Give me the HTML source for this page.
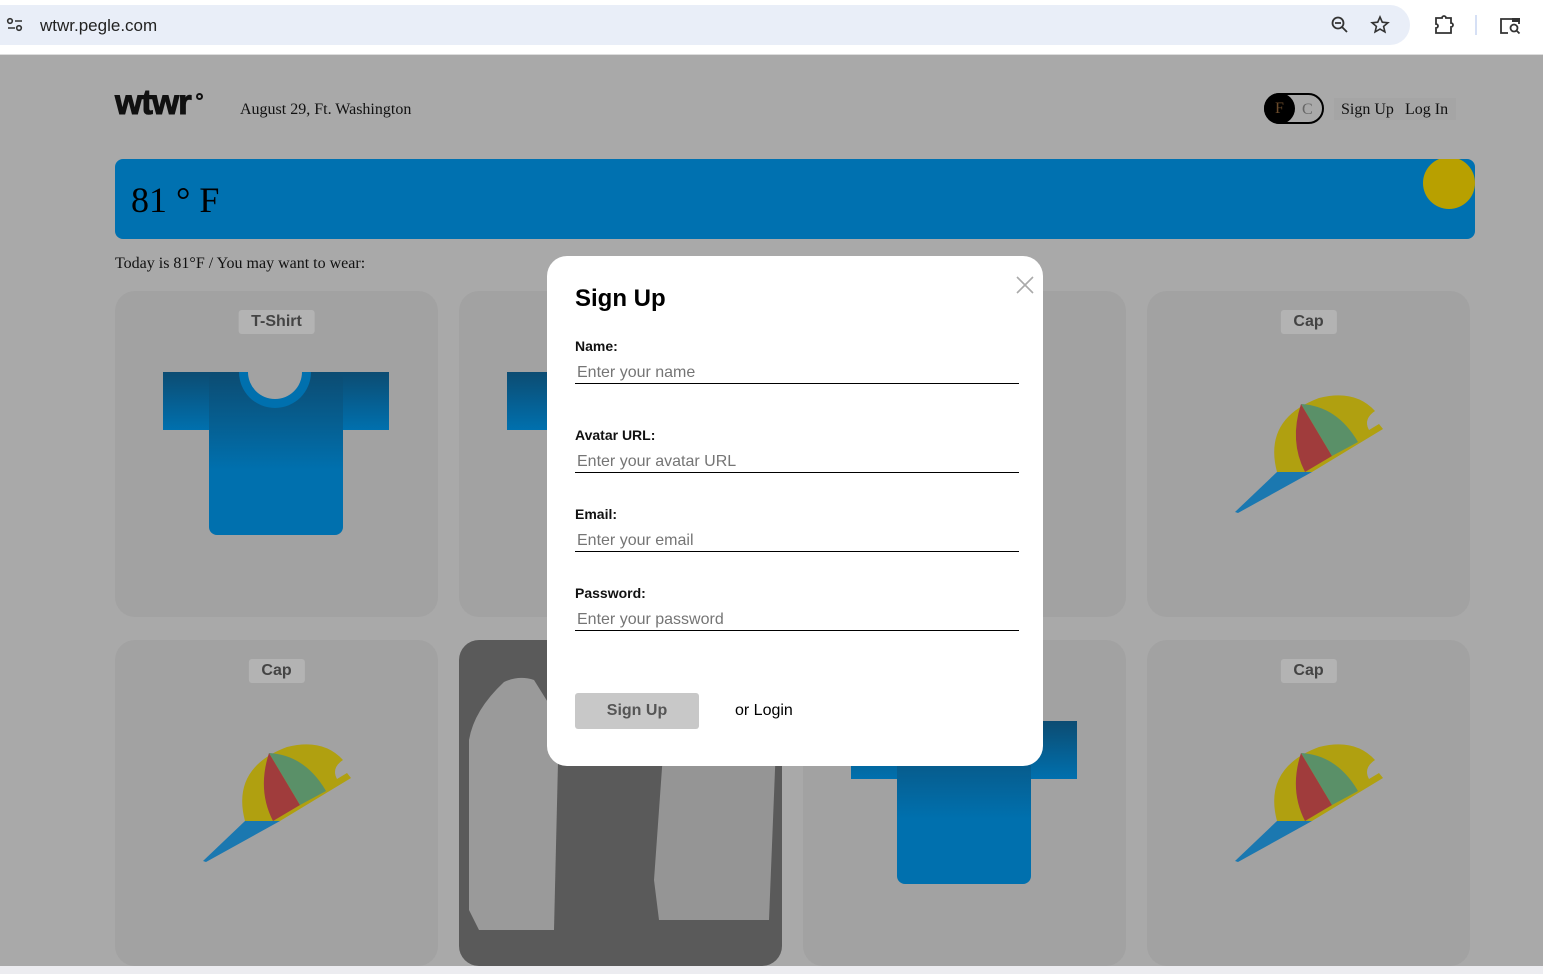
<!DOCTYPE html>
<html><head><meta charset="utf-8"><style>
*{box-sizing:border-box;margin:0;padding:0}
body{width:1543px;height:974px;overflow:hidden;background:#a9a9a9;font-family:"Liberation Serif",serif;position:relative}
.chrome{position:absolute;left:0;top:0;width:1543px;height:55px;background:#fff;border-bottom:1px solid #ddd}
.addr{position:absolute;left:0;top:5px;width:1410px;height:40px;background:#e9eef8;border-radius:0 20px 20px 0}
.addr .url{position:absolute;left:40px;top:11px;font:17px "Liberation Sans",sans-serif;color:#222}
.abs{position:absolute}
.card{position:absolute;width:323px;height:326px;background:#a2a2a2;border-radius:20px;overflow:hidden}
.lbl{position:absolute;top:19px;left:50%;transform:translateX(-50%);background:#b3b3b3;border-radius:3px;padding:3px 13px;font:bold 16px "Liberation Sans",sans-serif;color:#444;white-space:nowrap}
.modal{position:absolute;left:547px;top:256px;width:496px;height:510px;background:#fff;border-radius:20px}
.modal .l{position:absolute;left:28px;font:bold 14px "Liberation Sans",sans-serif;color:#111}
.modal .in{position:absolute;left:28px;width:444px;height:24px;border-bottom:1px solid #000;font:16px "Liberation Sans",sans-serif;color:#757575;padding-left:2px;line-height:26px}
</style></head><body>
<div class="chrome">
 <div class="addr"><svg class="abs" style="left:6px;top:12px" width="18" height="16" viewBox="0 0 18 16"><circle cx="4" cy="4" r="2.3" fill="none" stroke="#333" stroke-width="1.6"/><path d="M9 4h7M2 11h7" stroke="#333" stroke-width="1.6"/><circle cx="13" cy="11" r="2.3" fill="none" stroke="#333" stroke-width="1.6"/></svg><div class="url">wtwr.pegle.com</div>
 <svg class="abs" style="left:1330px;top:10px" width="20" height="20" viewBox="0 0 20 20"><circle cx="8" cy="8" r="5.5" fill="none" stroke="#333" stroke-width="1.8"/><path d="M5 8h6M12 12l5 5" stroke="#333" stroke-width="1.8"/></svg>
 <svg class="abs" style="left:1370px;top:10px" width="20" height="20" viewBox="0 0 20 20"><path d="M10 2l2.3 5.2 5.6.5-4.3 3.7 1.3 5.5L10 14l-4.9 2.9 1.3-5.5L2.1 7.7l5.6-.5z" fill="none" stroke="#333" stroke-width="1.6"/></svg></div>
 <svg class="abs" style="left:1433px;top:14px" width="22" height="22" viewBox="0 0 22 22"><path d="M3 4h6a2 2 0 0 1 4 0h5v5a2 2 0 0 1 0 4v6H3v-5a2 2 0 0 0 0-4z" fill="none" stroke="#333" stroke-width="1.8"/></svg>
 <div class="abs" style="left:1475px;top:15px;width:2px;height:20px;background:#d6e0f5"></div>
 <svg class="abs" style="left:1499px;top:16px" width="24" height="20" viewBox="0 0 24 20"><path d="M9 17H2V3h18v5" fill="none" stroke="#333" stroke-width="1.8"/><rect x="13" y="2" width="8" height="4" fill="#333"/><circle cx="15" cy="12" r="3.5" fill="none" stroke="#333" stroke-width="1.8"/><path d="M17.5 14.5l3 3" stroke="#333" stroke-width="1.8"/></svg>
</div>

<div class="abs" style="left:115px;top:83px;font:900 35px 'Liberation Sans',sans-serif;letter-spacing:-1px;color:#111;-webkit-text-stroke:1px #111">wtwr</div>
<div class="abs" style="left:196px;top:93px;width:7px;height:7px;border:2px solid #111;border-radius:50%"></div>
<div class="abs" style="left:240px;top:101px;font-size:16px;color:#111">August 29, Ft. Washington</div>
<div class="abs" style="left:1264px;top:93px;width:60px;height:31px;border:2px solid #000;border-radius:16px"></div>
<div class="abs" style="left:1264px;top:93px;width:31px;height:31px;background:#000;border-radius:50%;color:#6a4a2a;font-size:16px;text-align:center;line-height:31px">F</div>
<div class="abs" style="left:1302px;top:101px;font-size:16px;color:#666">C</div>
<div class="abs" style="left:1334px;top:98px;width:122px;height:22px;background:#a5a5a5"></div>
<div class="abs" style="left:1341px;top:101px;font-size:16px;color:#111">Sign Up</div>
<div class="abs" style="left:1405px;top:101px;font-size:16px;color:#111">Log In</div>

<div class="abs" style="left:115px;top:159px;width:1360px;height:80px;background:#0071b0;border-radius:8px;overflow:hidden">
 <div class="abs" style="left:16px;top:20px;font-size:36px;color:#000">81 ° F</div>
 <div class="abs" style="left:1308px;top:-2px;width:52px;height:52px;background:#b8a000;border-radius:50%"></div>
</div>
<div class="abs" style="left:115px;top:255px;font-size:16px;color:#111">Today is 81°F / You may want to wear:</div>

<svg width="0" height="0" style="position:absolute"><defs>
<linearGradient id="tg" x1="0" y1="0" x2="0" y2="1"><stop offset="0" stop-color="#0c4c72"/><stop offset=".6" stop-color="#0070ae"/></linearGradient>
<linearGradient id="sg" x1="0" y1="0" x2="0" y2="1"><stop offset="0" stop-color="#0c4c72"/><stop offset="1" stop-color="#0070ae"/></linearGradient>
<g id="shirt"><rect x="48" y="81" width="226" height="58" fill="url(#sg)"/><rect x="94" y="81" width="134" height="163" rx="8" fill="url(#tg)"/><path d="M124 81a36 36 0 0 0 72 0z" fill="#0070ae"/><path d="M133 81a27 27 0 0 0 54 0z" fill="#a2a2a2"/></g>
<g id="cap"><path d="M130 181Q116 128 172 107Q208 98 228 120Q216 128 222 139L232 133L236 138L165 181Z" fill="#b0a010"/><path d="M154 113Q142 150 158 181L185 165Z" fill="#a03c3c"/><path d="M154 113Q190 115 211 151L185 165Z" fill="#5a9068"/><path d="M130 181L88 221L91 222L165 181Z" fill="#1b78b0"/></g>
</defs></svg>

<div class="card" style="left:115px;top:291px"><div class="lbl">T-Shirt</div><svg width="323" height="326"><use href="#shirt"/></svg></div>
<div class="card" style="left:459px;top:291px"><svg width="323" height="326"><use href="#shirt"/></svg></div>
<div class="card" style="left:803px;top:291px"></div>
<div class="card" style="left:1147px;top:291px"><div class="lbl">Cap</div><svg width="323" height="326"><use href="#cap"/></svg></div>
<div class="card" style="left:115px;top:640px"><div class="lbl">Cap</div><svg width="323" height="326"><use href="#cap"/></svg></div>
<div class="card" style="left:459px;top:640px;background:#5a5a5a"><svg width="323" height="326"><path d="M45 42Q60 35 75 40L100 80L95 290L20 290L10 270L10 100Q15 70 45 42Z" fill="#9a9a9a"/><path d="M205 40L300 40L318 80L310 280L200 280L195 240L205 100Z" fill="#959595"/></svg></div>
<div class="card" style="left:803px;top:640px"><svg width="323" height="326"><use href="#shirt"/></svg></div>
<div class="card" style="left:1147px;top:640px"><div class="lbl">Cap</div><svg width="323" height="326"><use href="#cap"/></svg></div>
<div class="abs" style="left:0;top:966px;width:1543px;height:8px;background:#ececf0"></div>

<div class="modal">
 <svg class="abs" style="left:469px;top:20px" width="18" height="18" viewBox="0 0 18 18"><path d="M1 1l16 16M17 1L1 17" stroke="#aaa" stroke-width="1.6"/></svg>
 <div class="abs" style="left:28px;top:29px;font:bold 24px 'Liberation Sans',sans-serif;color:#000">Sign Up</div>
 <div class="l" style="top:82px">Name:</div><div class="in" style="top:104px">Enter your name</div>
 <div class="l" style="top:171px">Avatar URL:</div><div class="in" style="top:193px">Enter your avatar URL</div>
 <div class="l" style="top:250px">Email:</div><div class="in" style="top:272px">Enter your email</div>
 <div class="l" style="top:329px">Password:</div><div class="in" style="top:351px">Enter your password</div>
 <div class="abs" style="left:28px;top:437px;width:124px;height:36px;background:#c8c8c8;border-radius:3px;font:bold 16px 'Liberation Sans',sans-serif;color:#555;text-align:center;line-height:36px">Sign Up</div>
 <div class="abs" style="left:188px;top:446px;font:16px 'Liberation Sans',sans-serif;color:#000">or Login</div>
</div>
</body></html>
